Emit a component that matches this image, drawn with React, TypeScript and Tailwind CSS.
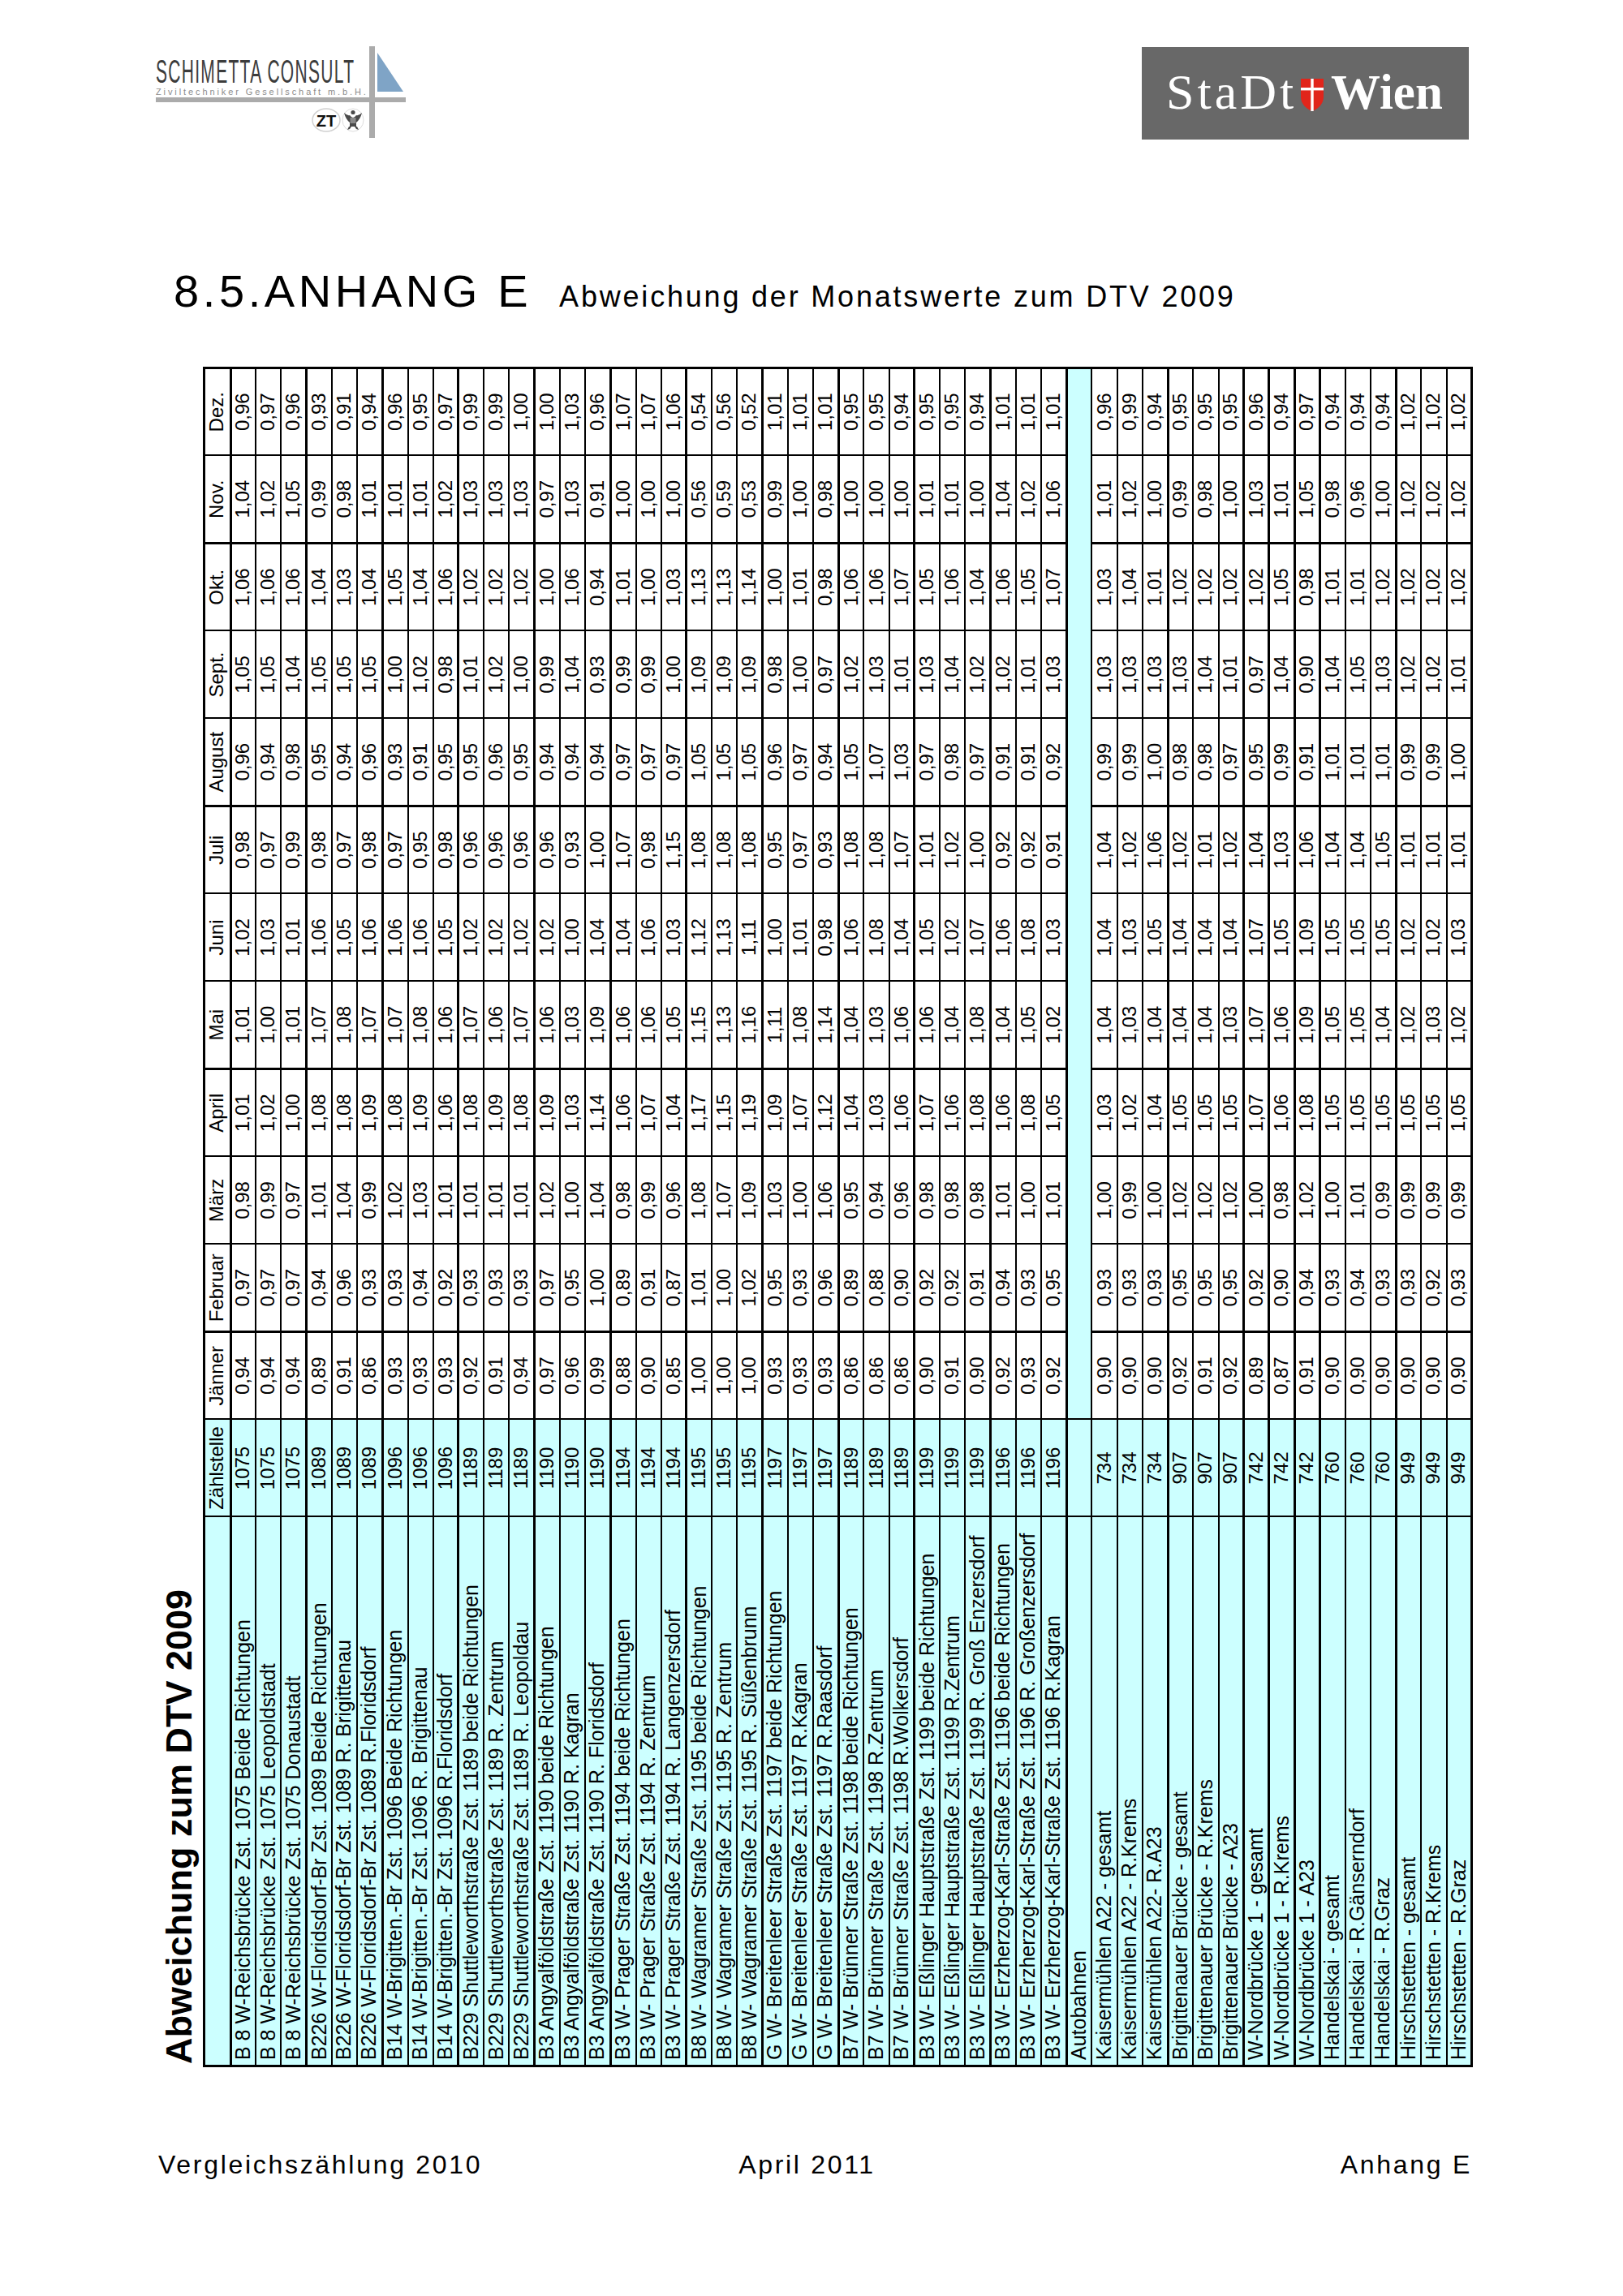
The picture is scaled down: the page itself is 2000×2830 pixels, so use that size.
import React from "react";

const months = ["Jänner", "Februar", "März", "April", "Mai", "Juni", "Juli", "August", "Sept.", "Okt.", "Nov.", "Dez."];
const thickMonthLeft = new Set([1, 4, 7, 10]);

type Row = { name: string; zst: string; v?: string; section?: boolean };

const rows: Row[] = [
  { name: "B 8 W-Reichsbrücke Zst. 1075 Beide Richtungen", zst: "1075", v: "0,94 0,97 0,98 1,01 1,01 1,02 0,98 0,96 1,05 1,06 1,04 0,96" },
  { name: "B 8 W-Reichsbrücke Zst. 1075 Leopoldstadt", zst: "1075", v: "0,94 0,97 0,99 1,02 1,00 1,03 0,97 0,94 1,05 1,06 1,02 0,97" },
  { name: "B 8 W-Reichsbrücke Zst. 1075 Donaustadt", zst: "1075", v: "0,94 0,97 0,97 1,00 1,01 1,01 0,99 0,98 1,04 1,06 1,05 0,96" },
  { name: "B226 W-Floridsdorf-Br Zst. 1089 Beide Richtungen", zst: "1089", v: "0,89 0,94 1,01 1,08 1,07 1,06 0,98 0,95 1,05 1,04 0,99 0,93" },
  { name: "B226 W-Floridsdorf-Br Zst. 1089 R. Brigittenau", zst: "1089", v: "0,91 0,96 1,04 1,08 1,08 1,05 0,97 0,94 1,05 1,03 0,98 0,91" },
  { name: "B226 W-Floridsdorf-Br Zst. 1089 R.Floridsdorf", zst: "1089", v: "0,86 0,93 0,99 1,09 1,07 1,06 0,98 0,96 1,05 1,04 1,01 0,94" },
  { name: "B14 W-Brigitten.-Br Zst. 1096 Beide Richtungen", zst: "1096", v: "0,93 0,93 1,02 1,08 1,07 1,06 0,97 0,93 1,00 1,05 1,01 0,96" },
  { name: "B14 W-Brigitten.-Br Zst. 1096 R. Brigittenau", zst: "1096", v: "0,93 0,94 1,03 1,09 1,08 1,06 0,95 0,91 1,02 1,04 1,01 0,95" },
  { name: "B14 W-Brigitten.-Br Zst. 1096 R.Floridsdorf", zst: "1096", v: "0,93 0,92 1,01 1,06 1,06 1,05 0,98 0,95 0,98 1,06 1,02 0,97" },
  { name: "B229 Shuttleworthstraße Zst. 1189 beide Richtungen", zst: "1189", v: "0,92 0,93 1,01 1,08 1,07 1,02 0,96 0,95 1,01 1,02 1,03 0,99" },
  { name: "B229 Shuttleworthstraße Zst. 1189 R. Zentrum", zst: "1189", v: "0,91 0,93 1,01 1,09 1,06 1,02 0,96 0,96 1,02 1,02 1,03 0,99" },
  { name: "B229 Shuttleworthstraße Zst. 1189 R. Leopoldau", zst: "1189", v: "0,94 0,93 1,01 1,08 1,07 1,02 0,96 0,95 1,00 1,02 1,03 1,00" },
  { name: "B3 Angyalföldstraße Zst. 1190 beide Richtungen", zst: "1190", v: "0,97 0,97 1,02 1,09 1,06 1,02 0,96 0,94 0,99 1,00 0,97 1,00" },
  { name: "B3 Angyalföldstraße Zst. 1190 R. Kagran", zst: "1190", v: "0,96 0,95 1,00 1,03 1,03 1,00 0,93 0,94 1,04 1,06 1,03 1,03" },
  { name: "B3 Angyalföldstraße Zst. 1190 R. Floridsdorf", zst: "1190", v: "0,99 1,00 1,04 1,14 1,09 1,04 1,00 0,94 0,93 0,94 0,91 0,96" },
  { name: "B3 W- Prager Straße Zst. 1194 beide Richtungen", zst: "1194", v: "0,88 0,89 0,98 1,06 1,06 1,04 1,07 0,97 0,99 1,01 1,00 1,07" },
  { name: "B3 W- Prager Straße Zst. 1194 R. Zentrum", zst: "1194", v: "0,90 0,91 0,99 1,07 1,06 1,06 0,98 0,97 0,99 1,00 1,00 1,07" },
  { name: "B3 W- Prager Straße Zst. 1194 R. Langenzersdorf", zst: "1194", v: "0,85 0,87 0,96 1,04 1,05 1,03 1,15 0,97 1,00 1,03 1,00 1,06" },
  { name: "B8 W- Wagramer Straße Zst. 1195 beide Richtungen", zst: "1195", v: "1,00 1,01 1,08 1,17 1,15 1,12 1,08 1,05 1,09 1,13 0,56 0,54" },
  { name: "B8 W- Wagramer Straße Zst. 1195 R. Zentrum", zst: "1195", v: "1,00 1,00 1,07 1,15 1,13 1,13 1,08 1,05 1,09 1,13 0,59 0,56" },
  { name: "B8 W- Wagramer Straße Zst. 1195 R. Süßenbrunn", zst: "1195", v: "1,00 1,02 1,09 1,19 1,16 1,11 1,08 1,05 1,09 1,14 0,53 0,52" },
  { name: "G W- Breitenleer Straße Zst. 1197 beide Richtungen", zst: "1197", v: "0,93 0,95 1,03 1,09 1,11 1,00 0,95 0,96 0,98 1,00 0,99 1,01" },
  { name: "G W- Breitenleer Straße Zst. 1197 R.Kagran", zst: "1197", v: "0,93 0,93 1,00 1,07 1,08 1,01 0,97 0,97 1,00 1,01 1,00 1,01" },
  { name: "G W- Breitenleer Straße Zst. 1197 R.Raasdorf", zst: "1197", v: "0,93 0,96 1,06 1,12 1,14 0,98 0,93 0,94 0,97 0,98 0,98 1,01" },
  { name: "B7 W- Brünner Straße Zst. 1198 beide Richtungen", zst: "1189", v: "0,86 0,89 0,95 1,04 1,04 1,06 1,08 1,05 1,02 1,06 1,00 0,95" },
  { name: "B7 W- Brünner Straße Zst. 1198 R.Zentrum", zst: "1189", v: "0,86 0,88 0,94 1,03 1,03 1,08 1,08 1,07 1,03 1,06 1,00 0,95" },
  { name: "B7 W- Brünner Straße Zst. 1198 R.Wolkersdorf", zst: "1189", v: "0,86 0,90 0,96 1,06 1,06 1,04 1,07 1,03 1,01 1,07 1,00 0,94" },
  { name: "B3 W- Eßlinger Hauptstraße Zst. 1199 beide Richtungen", zst: "1199", v: "0,90 0,92 0,98 1,07 1,06 1,05 1,01 0,97 1,03 1,05 1,01 0,95" },
  { name: "B3 W- Eßlinger Hauptstraße Zst. 1199 R.Zentrum", zst: "1199", v: "0,91 0,92 0,98 1,06 1,04 1,02 1,02 0,98 1,04 1,06 1,01 0,95" },
  { name: "B3 W- Eßlinger Hauptstraße Zst. 1199 R. Groß Enzersdorf", zst: "1199", v: "0,90 0,91 0,98 1,08 1,08 1,07 1,00 0,97 1,02 1,04 1,00 0,94" },
  { name: "B3 W- Erzherzog-Karl-Straße Zst. 1196 beide Richtungen", zst: "1196", v: "0,92 0,94 1,01 1,06 1,04 1,06 0,92 0,91 1,02 1,06 1,04 1,01" },
  { name: "B3 W- Erzherzog-Karl-Straße Zst. 1196 R. Großenzersdorf", zst: "1196", v: "0,93 0,93 1,00 1,08 1,05 1,08 0,92 0,91 1,01 1,05 1,02 1,01" },
  { name: "B3 W- Erzherzog-Karl-Straße Zst. 1196 R.Kagran", zst: "1196", v: "0,92 0,95 1,01 1,05 1,02 1,03 0,91 0,92 1,03 1,07 1,06 1,01" },
  { name: "Autobahnen", zst: "", section: true },
  { name: "Kaisermühlen A22 - gesamt", zst: "734", v: "0,90 0,93 1,00 1,03 1,04 1,04 1,04 0,99 1,03 1,03 1,01 0,96" },
  { name: "Kaisermühlen A22 - R.Krems", zst: "734", v: "0,90 0,93 0,99 1,02 1,03 1,03 1,02 0,99 1,03 1,04 1,02 0,99" },
  { name: "Kaisermühlen A22- R.A23", zst: "734", v: "0,90 0,93 1,00 1,04 1,04 1,05 1,06 1,00 1,03 1,01 1,00 0,94" },
  { name: "Brigittenauer Brücke - gesamt", zst: "907", v: "0,92 0,95 1,02 1,05 1,04 1,04 1,02 0,98 1,03 1,02 0,99 0,95" },
  { name: "Brigittenauer Brücke - R.Krems", zst: "907", v: "0,91 0,95 1,02 1,05 1,04 1,04 1,01 0,98 1,04 1,02 0,98 0,95" },
  { name: "Brigittenauer Brücke - A23", zst: "907", v: "0,92 0,95 1,02 1,05 1,03 1,04 1,02 0,97 1,01 1,02 1,00 0,95" },
  { name: "W-Nordbrücke 1 - gesamt", zst: "742", v: "0,89 0,92 1,00 1,07 1,07 1,07 1,04 0,95 0,97 1,02 1,03 0,96" },
  { name: "W-Nordbrücke 1 - R.Krems", zst: "742", v: "0,87 0,90 0,98 1,06 1,06 1,05 1,03 0,99 1,04 1,05 1,01 0,94" },
  { name: "W-Nordbrücke 1 - A23", zst: "742", v: "0,91 0,94 1,02 1,08 1,09 1,09 1,06 0,91 0,90 0,98 1,05 0,97" },
  { name: "Handelskai - gesamt", zst: "760", v: "0,90 0,93 1,00 1,05 1,05 1,05 1,04 1,01 1,04 1,01 0,98 0,94" },
  { name: "Handelskai - R.Gänserndorf", zst: "760", v: "0,90 0,94 1,01 1,05 1,05 1,05 1,04 1,01 1,05 1,01 0,96 0,94" },
  { name: "Handelskai - R.Graz", zst: "760", v: "0,90 0,93 0,99 1,05 1,04 1,05 1,05 1,01 1,03 1,02 1,00 0,94" },
  { name: "Hirschstetten - gesamt", zst: "949", v: "0,90 0,93 0,99 1,05 1,02 1,02 1,01 0,99 1,02 1,02 1,02 1,02" },
  { name: "Hirschstetten - R.Krems", zst: "949", v: "0,90 0,92 0,99 1,05 1,03 1,02 1,01 0,99 1,02 1,02 1,02 1,02" },
  { name: "Hirschstetten - R.Graz", zst: "949", v: "0,90 0,93 0,99 1,05 1,02 1,03 1,01 1,00 1,01 1,02 1,02 1,02" },
];

// data row index (0-based) whose top border is thick
const thickTop = new Set([0, 3, 6, 9, 12, 15, 18, 21, 24, 27, 30, 33, 37, 40, 41, 42, 43, 46]);

function SchimettaLogo() {
  return (
    <svg width="330" height="120" viewBox="0 0 330 120">
      <text
        transform="translate(7 47) scale(1 1.93)"
        fontFamily="Liberation Sans, Arial, sans-serif"
        fontSize="21"
        letterSpacing="1.3"
        fill="#3c3c3c"
      >
        SCHIMETTA CONSULT
      </text>
      <text
        x="7"
        y="62"
        fontFamily="Liberation Sans, Arial, sans-serif"
        fontSize="11"
        letterSpacing="2.9"
        fill="#8d8d8d"
      >
        Ziviltechniker Gesellschaft m.b.H.
      </text>
      <rect x="7" y="65" width="308" height="6" fill="#ababab" />
      <rect x="270" y="2" width="7" height="113" fill="#ababab" />
      <polygon points="280,10 280,58 312,58" fill="#7fa4c6" />
      <ellipse cx="217" cy="93" rx="17" ry="14" fill="#ffffff" stroke="#d0d0d0" strokeWidth="1.5" />
      <text
        x="217"
        y="100.5"
        textAnchor="middle"
        fontFamily="Liberation Sans, Arial, sans-serif"
        fontWeight="bold"
        fontSize="20"
        fill="#111"
      >
        ZT
      </text>
      <ellipse cx="250" cy="93" rx="13" ry="14" fill="#ffffff" stroke="#dddddd" strokeWidth="1" />
      <g fill="#4a4a4a">
        <circle cx="250" cy="83.5" r="2.6" />
        <path d="M239 84 Q241 92 246 96 L246 101 L254 101 L254 96 Q259 92 261 84 Q257 88 254 87 Q252 90 250 90 Q248 90 246 87 Q243 88 239 84 Z" />
        <rect x="246.5" y="90" width="7" height="7" fill="#8a8a8a" />
        <path d="M245 101 L243 105 L246 104 L248 101 Z M255 101 L257 105 L254 104 L252 101 Z" />
      </g>
    </svg>
  );
}

function WienLogo() {
  return (
    <div className="mt-[3px] w-[403px] h-[114px] bg-[#686868]">
      <svg width="403" height="114" viewBox="0 0 403 114">
        <text
          x="30"
          y="76"
          fontFamily="Liberation Serif, Times New Roman, serif"
          fontSize="62"
          letterSpacing="4"
          fill="#ffffff"
        >
          StaDt
        </text>
        <path d="M196 39 L224 39 L224 61 Q224 73 210 79 Q196 73 196 61 Z" fill="#e1251b" />
        <rect x="208.3" y="39" width="3.4" height="40" fill="#ffffff" />
        <rect x="196" y="50" width="28" height="3.4" fill="#ffffff" />
        <text
          x="233"
          y="76"
          fontFamily="Liberation Serif, Times New Roman, serif"
          fontWeight="bold"
          fontSize="61"
          fill="#ffffff"
        >
          Wien
        </text>
      </svg>
    </div>
  );
}

function DataTable() {
  return (
    <table className="border-collapse table-fixed w-[2093px] border-[3px] border-black text-[24px] leading-[26px] text-black">
      <colgroup>
        <col className="w-[677px]" />
        <col className="w-[120px]" />
        {months.map((m) => (
          <col key={m} className="w-[108px]" />
        ))}
      </colgroup>
      <tbody>
        <tr className="h-[32.5px]">
          <td className="border-[2px] border-black bg-[#ccffff]"></td>
          <td className="border-[2px] border-black bg-[#ccffff] text-center align-middle pb-[1px]">Zählstelle</td>
          {months.map((m, i) => (
            <td
              key={m}
              className={`border-[2px] border-black bg-white text-center align-middle pb-[1px] ${thickMonthLeft.has(i) ? "border-l-[3px]" : ""}`}
            >
              {m}
            </td>
          ))}
        </tr>
        {rows.map((r, ri) => {
          const tt = thickTop.has(ri) ? "border-t-[3px]" : "";
          if (r.section) {
            return (
              <tr key={ri} className="h-[31.22px]">
                <td className={`border-[2px] border-black bg-[#ccffff] pl-[6px] align-middle pb-[1px] whitespace-nowrap overflow-hidden text-[25px] leading-[25px] ${tt}`}>
                  {r.name}
                </td>
                <td className={`border-[2px] border-black bg-[#ccffff] ${tt}`}></td>
                <td colSpan={12} className={`border-[2px] border-black bg-[#ccffff] ${tt}`}></td>
              </tr>
            );
          }
          const vals = (r.v || "").split(" ");
          return (
            <tr key={ri} className="h-[31.22px]">
              <td className={`border-[2px] border-black bg-[#ccffff] pl-[6px] align-middle pb-[1px] whitespace-nowrap overflow-hidden text-[25px] leading-[25px] ${tt}`}>
                {r.name}
              </td>
              <td className={`border-[2px] border-black bg-[#ccffff] text-center align-middle pb-[1px] ${tt}`}>{r.zst}</td>
              {vals.map((v, i) => (
                <td
                  key={i}
                  className={`border-[2px] border-black bg-white text-center align-middle pb-[1px] ${tt} ${thickMonthLeft.has(i) ? "border-l-[3px]" : ""}`}
                >
                  {v}
                </td>
              ))}
            </tr>
          );
        })}
      </tbody>
    </table>
  );
}

export default function App() {
  return (
    <div className="w-[2000px] h-[2830px] bg-white text-black font-['Liberation_Sans',Arial,sans-serif] overflow-hidden">
      <header className="flex justify-between items-start pl-[185px] pr-[190px] pt-[55px]">
        <SchimettaLogo />
        <WienLogo />
      </header>

      <div className="mt-[156px] pl-[214px] flex items-baseline leading-none">
        <span className="text-[56px] tracking-[4.6px]">8.5.ANHANG E</span>
        <span className="ml-[34px] text-[36px] tracking-[2.8px]">Abweichung der Monatswerte zum DTV 2009</span>
      </div>

      <div className="ml-[199px] mt-[51px] w-[1621px] h-[2110px] relative">
        <div className="absolute left-0 top-0 w-[2110px] h-[1621px] origin-top-left translate-y-[2110px] -rotate-90">
          <div className="h-[51px] pl-[4px] text-[45px] font-bold leading-[44px] whitespace-nowrap">
            Abweichung zum DTV 2009
          </div>
          <DataTable />
        </div>
      </div>

      <footer className="mt-[103px] pl-[195px] pr-[186px] grid grid-cols-3 text-[32px] leading-[34px] tracking-[2.7px]">
        <span className="text-left">Vergleichszählung 2010</span>
        <span className="text-center pr-[20px]">April 2011</span>
        <span className="text-right">Anhang E</span>
      </footer>
    </div>
  );
}
